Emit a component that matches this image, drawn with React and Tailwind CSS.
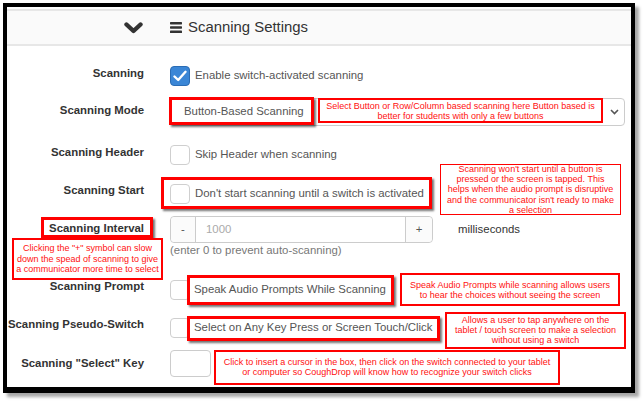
import React from "react";

const F = { fontFamily: '"Liberation Sans", Arial, sans-serif' };

function Box({ checked }) {
  if (checked) {
    return (
      <div className="w-[20px] h-[20px] rounded-[4px] bg-[#3a86d6] border border-[#2a6cb4] flex items-center justify-center shrink-0">
        <svg width="14" height="12" viewBox="0 0 14 12">
          <path d="M1.5 6.5 L5.2 10 L12.5 1.8" fill="none" stroke="#fff" strokeWidth="2.4" strokeLinecap="round" strokeLinejoin="round" />
        </svg>
      </div>
    );
  }
  return <div className="w-[20px] h-[20px] rounded-[4px] bg-white border border-[#cfcfcf] shrink-0" />;
}

function Row({ label, mt, h = "h-[28px]", lab = "mb-[4px]", children }) {
  return (
    <div className={`flex items-center ${h} ${mt}`}>
      <div className={`w-[137px] shrink-0 text-right whitespace-nowrap font-bold text-[11.4px] text-[#333] ${lab}`}>{label}</div>
      <div className="ml-[26px] flex items-center">{children}</div>
    </div>
  );
}

function Note({ cls, lines, pad = "" }) {
  return (
    <div className={`absolute bg-white border-[#f00] text-[#ff1010] text-[9px] text-center overflow-hidden ${cls}`}>
      <div className={pad}>
        {lines.map((l, i) => (
          <div key={i} className="whitespace-nowrap">{l}</div>
        ))}
      </div>
    </div>
  );
}

export default function App() {
  return (
    <div className="w-[644px] h-[401px] bg-white pt-[3px] pl-[3px] overflow-hidden" style={F}>
      <div className="relative w-[632px] h-[390px] border-[4px] border-b-[6px] border-black bg-white shadow-[4px_4px_3px_rgba(0,0,0,0.35)]">
        {/* header */}
        <div className="mt-[2px] h-[37px] border-y-2 border-[#e7e7e7] bg-[#fafafa] flex items-center">
          <div className="w-[136px] shrink-0 flex justify-end">
            <svg width="19" height="12" viewBox="0 0 19 12">
              <path d="M2.5 2.5 L9.5 9 L16.5 2.5" fill="none" stroke="#333" strokeWidth="4.4" strokeLinecap="round" strokeLinejoin="round" />
            </svg>
          </div>
          <div className="ml-[27px] flex items-center">
            <svg width="12" height="11" viewBox="0 0 12 11">
              <rect x="0" y="0" width="12" height="2.4" rx="0.6" fill="#333" />
              <rect x="0" y="4.3" width="12" height="2.4" rx="0.6" fill="#333" />
              <rect x="0" y="8.6" width="12" height="2.4" rx="0.6" fill="#333" />
            </svg>
            <span className="ml-[6px] text-[14.9px] text-[#333]">Scanning Settings</span>
          </div>
        </div>

        <div className="text-[11.4px] text-[#555]">
          <Row label="Scanning" mt="mt-[16px]">
            <Box checked />
            <span className="ml-[5px]">Enable switch-activated scanning</span>
          </Row>
          <Row label="Scanning Mode" mt="mt-[8px]" lab="mb-[2px]">
            <div className="w-[455px] h-[28px] border border-[#ccc] rounded-[4px] bg-white flex items-center justify-between pl-[13px] pr-[5px]">
              <span>Button-Based Scanning</span>
              <svg width="9" height="6" viewBox="0 0 9 6">
                <path d="M1 1 L4.5 4.5 L8 1" fill="none" stroke="#555" strokeWidth="1.6" />
              </svg>
            </div>
          </Row>
          <Row label="Scanning Header" mt="mt-[15px]">
            <Box />
            <span className="ml-[5px]">Skip Header when scanning</span>
          </Row>
          <Row label="Scanning Start" mt="mt-[11px]" lab="mb-[6px]">
            <Box />
            <span className="ml-[5px]">Don't start scanning until a switch is activated</span>
          </Row>
          <Row label="Scanning Interval" mt="mt-[8px]" h="h-[27px]" lab="mb-[1px]">
            <div className="w-[263px] h-[27px] border border-[#ccc] rounded-[4px] flex bg-white">
              <div className="w-[25px] border-r border-[#ccc] bg-[#fbfbfb] rounded-l-[4px] flex items-center justify-center text-[#555]">-</div>
              <div className="flex-1 flex items-center pl-[10px] text-[#aaa]">1000</div>
              <div className="w-[27px] border-l border-[#ccc] bg-[#fbfbfb] rounded-r-[4px] flex items-center justify-center text-[#555]">+</div>
            </div>
            <span className="ml-[25px] text-[#333]">milliseconds</span>
          </Row>
          <div className="ml-[163px] h-[13px] leading-[13px] mt-[1px] text-[#777]">(enter 0 to prevent auto-scanning)</div>
          <Row label="Scanning Prompt" mt="mt-[19px]" lab="mb-[6px]">
            <Box />
            <span className="ml-[4px]">Speak Audio Prompts While Scanning</span>
          </Row>
          <Row label="Scanning Pseudo-Switch" mt="mt-[10px]" lab="mb-[6px]">
            <Box />
            <span className="ml-[4px]">Select on Any Key Press or Screen Touch/Click</span>
          </Row>
          <Row label={'Scanning "Select" Key'} mt="mt-[8px]" h="h-[27px]" lab="mb-[0px]">
            <div className="w-[41px] h-[27px] border border-[#ccc] rounded-[4px] bg-white" />
          </Row>
        </div>

        {/* thick highlight boxes */}
        <div className="absolute left-[162px] top-[90px] w-[145px] h-[28px] border-[3px] border-[#f00] shadow-[2px_2px_2px_rgba(0,0,0,0.55)]" />
        <div className="absolute left-[154px] top-[170px] w-[271px] h-[32px] border-[3px] border-[#f00] shadow-[2px_2px_2px_rgba(0,0,0,0.55)]" />
        <div className="absolute left-[34px] top-[210px] w-[112px] h-[21px] border-[3px] border-[#f00] shadow-[2px_2px_2px_rgba(0,0,0,0.55)]" />
        <div className="absolute left-[180px] top-[268px] w-[207px] h-[30px] border-[3px] border-[#f00] shadow-[2px_2px_2px_rgba(0,0,0,0.55)]" />
        <div className="absolute left-[180px] top-[309px] w-[253px] h-[25px] border-[3px] border-[#f00] shadow-[2px_2px_2px_rgba(0,0,0,0.55)]" />

        {/* annotations */}
        <Note
          cls="left-[311px] top-[91px] w-[285px] h-[25px] border-[2px] leading-[10px] flex items-center justify-center"
          lines={["Select Button or Row/Column based scanning here Button based is", "better for students with only a few buttons"]}
        />
        <Note
          cls="left-[433px] top-[157px] w-[181px] h-[51px] border-[1px] leading-[10.2px]"
          pad="-mt-[1px]"
          lines={[
            "Scanning won't start until a button is",
            "pressed or the screen is tapped.  This",
            "helps when the audio prompt is disruptive",
            "and the communicator isn't ready to make",
            "a selection",
          ]}
        />
        <Note
          cls="left-[5px] top-[231px] w-[151px] h-[42px] border-[2px] leading-[10.5px]"
          pad="pt-[3px]"
          lines={["Clicking the \"+\" symbol can slow", "down the spead of scanning to give", "a communicator more time to select"]}
        />
        <Note
          cls="left-[393px] top-[266px] w-[220px] h-[33px] border-[2px] leading-[10px]"
          pad="pt-[5px]"
          lines={["Speak Audio Prompts while scanning allows users", "to hear the choices without seeing the screen"]}
        />
        <Note
          cls="left-[438px] top-[305px] w-[181px] h-[37px] border-[2px] leading-[10px]"
          pad="pt-[1px]"
          lines={["Allows a user to tap anywhere on the", "tablet / touch screen to make a selection", "without using a switch"]}
        />
        <Note
          cls="left-[207px] top-[343px] w-[346px] h-[35px] border-[2px] leading-[10px]"
          pad="pt-[5px]"
          lines={[
            "Click to insert a cursor in the box, then click on the switch connected to your tablet",
            "or computer so CoughDrop will know how to recognize your switch clicks",
          ]}
        />
      </div>
    </div>
  );
}
